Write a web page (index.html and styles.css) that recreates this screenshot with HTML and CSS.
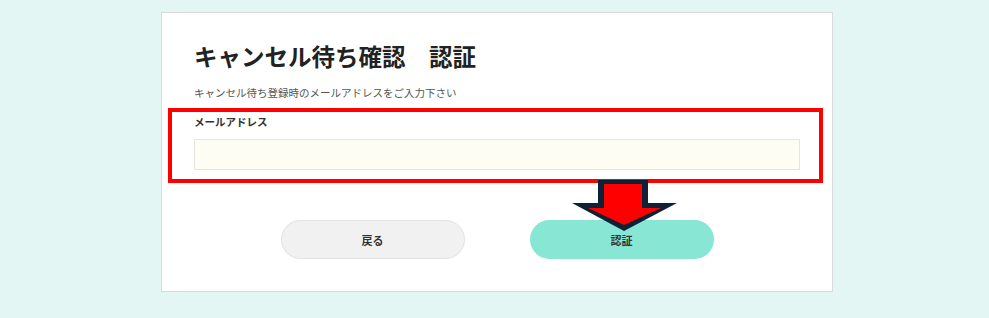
FILE: index.html
```html
<!DOCTYPE html>
<html>
  <head>
    <title>キャンセル待ち確認 認証</title>
    <link rel="stylesheet" href="styles.css">
  </head>
  <body>
    <div class="card">
      <h1 class="title">キャンセル待ち確認　認証</h1>
      <p class="lead">キャンセル待ち登録時のメールアドレスをご入力下さい</p>
      <form class="auth-form">
        <label for="email" class="field-label">メールアドレス</label>
        <input type="text" id="email" class="field-input">
        <div class="buttons">
          <button type="button" class="btn btn-back">戻る</button>
          <button type="button" class="btn btn-submit">認証</button>
        </div>
      </form>
      <!-- annotation overlay -->
      <div class="mark-box"></div>
      <svg class="mark-arrow" width="107" height="53" viewBox="0 0 107 53">
        <polygon points="27,1 77,1 77,24 106,24 53,52 1,24 27,24" fill="#0d2236"/>
        <polygon points="33,5 71,5 71,29 90,29 53,46 17,29 33,29" fill="#ff0000"/>
      </svg>
    </div>
  </body>
</html>
```

FILE: styles.css
```css
body {
  background: #e3f6f3;
  color: #222;
  font-family: "Noto Sans CJK JP", "Noto Sans", sans-serif;
  margin: 0;
  padding: 0;
}
.card {
  position: relative;
  box-sizing: border-box;
  width: 672px;
  margin: 12px 0 0 161px;
  padding: 27px 32px 32px 32px;
  background: #fff;
  border: 1px solid #dadada;
}
.title {
  margin: 0;
  font-size: 23.5px;
  line-height: 32px;
  font-weight: bold;
  color: #222;
}
.lead {
  margin: 13px 0 0;
  font-size: 10.5px;
  line-height: 16px;
  color: #555;
}
.auth-form {
  margin: 13px 0 0;
}
.field-label {
  display: block;
  font-size: 10.5px;
  line-height: 16px;
  font-weight: bold;
  color: #333;
}
.field-input {
  display: block;
  box-sizing: border-box;
  width: 606px;
  height: 31px;
  margin-top: 9px;
  background: #fdfdf3;
  border: 1px solid #e6e6df;
  outline: none;
}
.buttons {
  display: flex;
  justify-content: center;
  gap: 65px;
  margin-top: 50px;
}
.btn {
  box-sizing: border-box;
  width: 184px;
  height: 39px;
  border-radius: 20px;
  font-family: inherit;
  font-size: 11px;
  font-weight: bold;
  color: #333;
  cursor: pointer;
}
.btn-back {
  background: #f1f1f1;
  border: 1px solid #e2e2e2;
}
.btn-submit {
  background: #87e6d4;
  border: none;
}
.mark-box {
  position: absolute;
  left: 6px;
  top: 95px;
  width: 655px;
  height: 75px;
  box-sizing: border-box;
  border: 4px solid #ff0000;
}
.mark-arrow {
  position: absolute;
  left: 409px;
  top: 166px;
}
```
